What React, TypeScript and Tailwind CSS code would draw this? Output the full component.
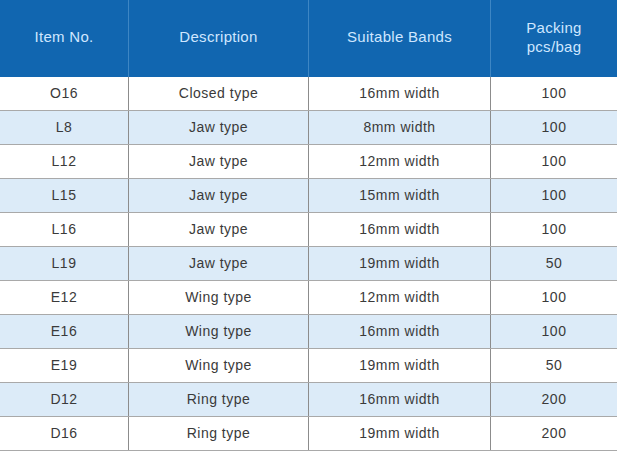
const ROWS: [string, string, string, string][] = [
  ["O16", "Closed type", "16mm width", "100"],
  ["L8", "Jaw type", "8mm width", "100"],
  ["L12", "Jaw type", "12mm width", "100"],
  ["L15", "Jaw type", "15mm width", "100"],
  ["L16", "Jaw type", "16mm width", "100"],
  ["L19", "Jaw type", "19mm width", "50"],
  ["E12", "Wing type", "12mm width", "100"],
  ["E16", "Wing type", "16mm width", "100"],
  ["E19", "Wing type", "19mm width", "50"],
  ["D12", "Ring type", "16mm width", "200"],
  ["D16", "Ring type", "19mm width", "200"],
];

const COLS = "grid grid-cols-[129px_180px_182px_126px]";

export default function App() {
  return (
    <div className="w-[620px] h-[454px] bg-white font-['Liberation_Sans',Arial,sans-serif] overflow-hidden">
      <div className="w-[617px]">
        <div className={`${COLS} h-[77px] bg-[#1166b0] text-[#cfe6ff] text-[15px] tracking-[0.3px] leading-[19px]`}>
          <div className="flex items-center justify-center border-r border-[#3d86c4] pb-[4px]">Item No.</div>
          <div className="flex items-center justify-center border-r border-[#3d86c4] pb-[4px]">Description</div>
          <div className="flex items-center justify-center border-r border-[#3d86c4] pb-[4px]">Suitable Bands</div>
          <div className="flex items-center justify-center text-center pb-[4px]">
            Packing
            <br />
            pcs/bag
          </div>
        </div>
        {ROWS.map((r, i) => (
          <div
            key={r[0]}
            className={`${COLS} h-[34px] border-b border-[#a9a9a9] text-[14px] tracking-[0.5px] text-[#3a3a3a] ${
              i % 2 === 1 ? "bg-[#dcebf8]" : "bg-white"
            }`}
          >
            <div className="flex items-center justify-center border-r border-[#8c8c8c]">{r[0]}</div>
            <div className="flex items-center justify-center border-r border-[#8c8c8c]">{r[1]}</div>
            <div className="flex items-center justify-center border-r border-[#8c8c8c]">{r[2]}</div>
            <div className="flex items-center justify-center">{r[3]}</div>
          </div>
        ))}
      </div>
    </div>
  );
}
